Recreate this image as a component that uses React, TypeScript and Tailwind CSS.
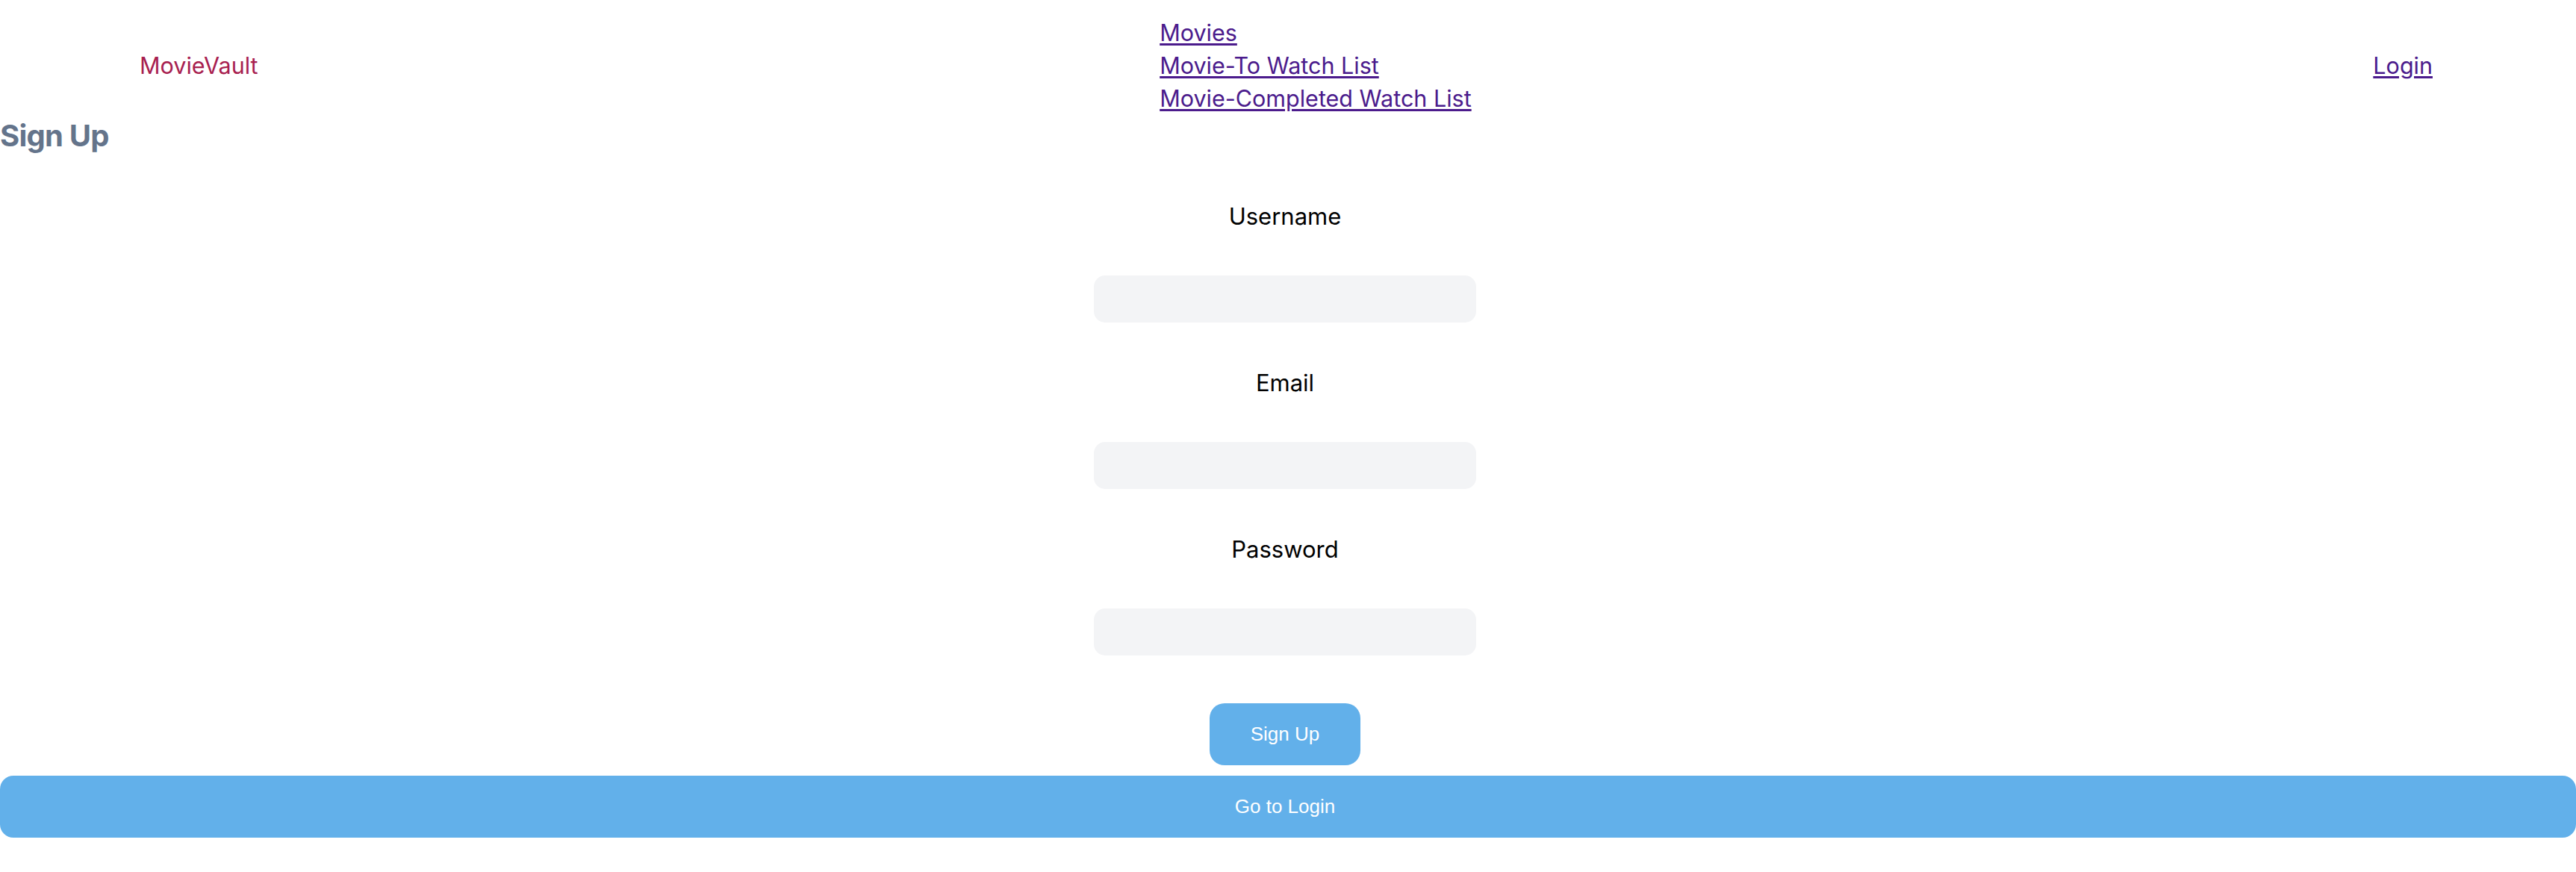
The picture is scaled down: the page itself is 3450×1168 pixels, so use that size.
const navLinks = ["Movies", "Movie-To Watch List", "Movie-Completed Watch List"];

const fields = [
  { label: "Username", type: "text" },
  { label: "Email", type: "email" },
  { label: "Password", type: "password" },
];

export default function App() {
  return (
    <div className="min-h-screen bg-white font-['Inter',sans-serif]">
      <header className="flex items-center justify-between pl-[187px] pr-[192px] pt-[22px]">
        <span className="text-[30.5px] leading-[44px] text-[#a8204f]">MovieVault</span>
        <nav className="flex flex-col text-[30.5px] leading-[44px] text-[#4b1b8c]">
          {navLinks.map((label) => (
            <a key={label} href="#" className="underline decoration-[3px] underline-offset-[3px]">
              {label}
            </a>
          ))}
        </nav>
        <a href="#" className="text-[30.5px] leading-[44px] text-[#4b1b8c] underline decoration-[3px] underline-offset-[3px]">
          Login
        </a>
      </header>

      <h2 className="text-[40px] font-bold leading-[55px] tracking-[-0.8px] text-[#64748b]">Sign Up</h2>

      <form className="flex flex-col items-center pr-[8px]" onSubmit={(e) => e.preventDefault()}>
        {fields.map(({ label, type }) => (
          <div key={label} className="flex flex-col items-center">
            <label className="mt-[59px] mb-[57px] text-[31px] leading-[44px] text-black">{label}</label>
            <input type={type} className="h-[63px] w-[512px] rounded-[15px] bg-[#f3f4f6] outline-none" />
          </div>
        ))}
        <button
          type="submit"
          className="mt-[64px] h-[83px] w-[202px] rounded-[20px] bg-[#62b0ea] font-['Liberation_Sans',Arial,sans-serif] text-[26px] text-white"
        >
          Sign Up
        </button>
      </form>

      <button className="mt-[14px] h-[83px] w-full rounded-[18px] bg-[#62b0ea] pr-[8px] font-['Liberation_Sans',Arial,sans-serif] text-[26px] text-white">
        Go to Login
      </button>
    </div>
  );
}
